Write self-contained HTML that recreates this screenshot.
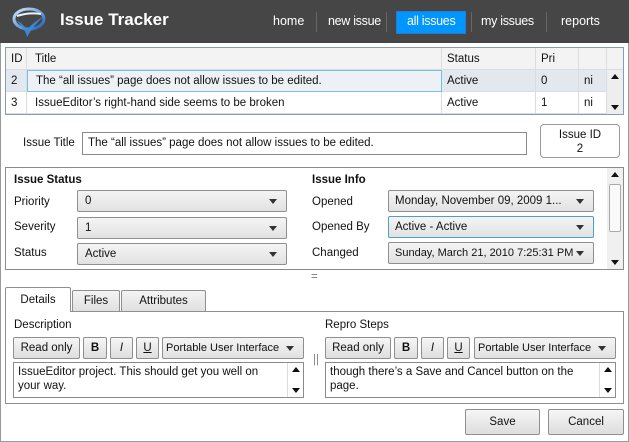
<!DOCTYPE html>
<html><head><style>
*{box-sizing:border-box;margin:0;padding:0}
body{width:629px;height:442px;overflow:hidden;background:#fff;font-family:"Liberation Sans",sans-serif;font-size:11.5px;color:#111;position:relative}
.a{position:absolute}
.hdr{left:0;top:0;width:629px;height:43px;background:#464646}
.nav{color:#fff;font-size:12.5px;top:14px}
.sep{top:12px;width:1px;height:20px;background:#666}
.frame{left:0;top:43px;width:629px;height:399px;border:1px solid #9a9a9a;border-top:none}
.grid{left:5px;top:47px;width:619px;height:68px;border:1px solid #8c9cb0;background:#fff}
.cell{position:absolute;height:22px;line-height:22px;padding-left:5px;border-right:1px solid #d8dde4;border-bottom:1px solid #d8dde4;white-space:nowrap;overflow:hidden}
.cb{position:absolute;height:22px;border:1px solid #8e8f8f;border-radius:2px;background:linear-gradient(#f4f4f4,#e2e2e2);line-height:20px;padding-left:7px;white-space:nowrap;overflow:hidden}
.cb:after{content:"";position:absolute;right:9px;top:8px;border-left:4px solid transparent;border-right:4px solid transparent;border-top:5px solid #333}
.btn{position:absolute;height:22px;border:1px solid #8e8f8f;border-radius:2px;background:linear-gradient(#f6f6f6,#dedede);text-align:center;line-height:20px}
.lbl{position:absolute}
.ta{position:absolute;border:1px solid #8a8a8a;background:#fff;padding:2px 22px 2px 4px;line-height:14px}
.sb{position:absolute;right:0;top:0;width:16px;height:100%;border-left:1px solid #ddd}
.up{position:absolute;left:4px;top:4px;border-left:4px solid transparent;border-right:4px solid transparent;border-bottom:5px solid #111}
.dn{position:absolute;left:4px;bottom:4px;border-left:4px solid transparent;border-right:4px solid transparent;border-top:5px solid #111}
.tab{position:absolute;height:24px;border:1px solid #8e8f8f;border-bottom:none;border-radius:2px 2px 0 0;background:linear-gradient(#f4f4f4,#e0e0e0);text-align:center;line-height:24px}
</style></head><body>
<div class="a hdr"></div>
<svg class="a" style="left:11px;top:4px" width="36" height="36" viewBox="0 0 36 36">
<defs><linearGradient id="g" x1="0" y1="0" x2="1" y2="1"><stop offset="0" stop-color="#cfe6ff"/><stop offset="1" stop-color="#1a5fb8"/></linearGradient></defs>
<ellipse cx="18" cy="15" rx="15" ry="10" fill="none" stroke="url(#g)" stroke-width="3"/>
<path d="M4 16 Q14 24 16 33 Q22 22 33 12 Q20 20 16 26 Q12 19 4 16Z" fill="#3a8de0" opacity=".9"/>
<path d="M6 12 Q18 8 30 10" stroke="#e8f4ff" stroke-width="2" fill="none"/>
</svg>
<div class="a" style="left:60px;top:10px;color:#fff;font-weight:bold;font-size:17px">Issue Tracker</div>
<div class="a nav" style="left:273px">home</div>
<div class="a sep" style="left:316px"></div>
<div class="a nav" style="left:328px;letter-spacing:-0.3px">new issue</div>
<div class="a sep" style="left:386px"></div>
<div class="a" style="left:396px;top:11px;width:70px;height:23px;background:#0096ff;border:1px solid #2a7ad0"></div>
<div class="a nav" style="left:407px;letter-spacing:-0.3px">all issues</div>
<div class="a sep" style="left:471px"></div>
<div class="a nav" style="left:481px;letter-spacing:-0.3px">my issues</div>
<div class="a sep" style="left:546px"></div>
<div class="a nav" style="left:561px">reports</div>
<div class="a frame"></div>

<div class="a grid">
<div class="cell" style="left:0;top:0;width:21px;background:#f3f3f3">ID</div>
<div class="cell" style="left:21px;top:0;width:415px;background:#f3f3f3;padding-left:8px">Title</div>
<div class="cell" style="left:436px;top:0;width:94px;background:#f3f3f3">Status</div>
<div class="cell" style="left:530px;top:0;width:43px;background:#f3f3f3">Pri</div>
<div class="cell" style="left:573px;top:0;width:28px;background:#f3f3f3"></div>
<div class="cell" style="left:0;top:22px;width:21px;background:#e3e7ee">2</div>
<div class="cell" style="left:21px;top:22px;width:415px;background:#edf0f4;border:1px solid #78c3dc;padding-left:8px;line-height:20px">The “all issues” page does not allow issues to be edited.</div>
<div class="cell" style="left:436px;top:22px;width:94px;background:#e3e7ee">Active</div>
<div class="cell" style="left:530px;top:22px;width:43px;background:#e3e7ee">0</div>
<div class="cell" style="left:573px;top:22px;width:28px;background:#e3e7ee">ni</div>
<div class="cell" style="left:0;top:44px;width:21px">3</div>
<div class="cell" style="left:21px;top:44px;width:415px;padding-left:8px">IssueEditor’s right-hand side seems to be broken</div>
<div class="cell" style="left:436px;top:44px;width:94px">Active</div>
<div class="cell" style="left:530px;top:44px;width:43px">1</div>
<div class="cell" style="left:573px;top:44px;width:28px">ni</div>
<div style="position:absolute;left:601px;top:0;width:16px;height:22px;background:#f3f3f3;border-bottom:1px solid #d8dde4"></div>
<div style="position:absolute;left:601px;top:22px;width:16px;height:44px;background:#eeeeee"><div class="up"></div><div class="dn"></div></div>
</div>

<div class="lbl" style="left:23px;top:137px">Issue Title</div>
<div class="a" style="left:82px;top:132px;width:445px;height:23px;border:1px solid #8a8a8a;line-height:21px;padding-left:5px">The “all issues” page does not allow issues to be edited.</div>
<div class="a" style="left:540px;top:124px;width:80px;height:34px;border:1px solid #999;border-radius:4px;text-align:center;line-height:14px;padding-top:3px">Issue ID<br>2</div>

<div class="a" style="left:5px;top:167px;width:619px;height:103px;border:1px solid #8a8a8a"></div>
<div class="a" style="left:607px;top:168px;width:16px;height:101px;background:#f0f0f0"><div class="up"></div><div style="position:absolute;left:2px;top:16px;width:12px;height:48px;border:1px solid #aaa;border-radius:2px;background:#fafafa"></div><div class="dn"></div></div>
<div class="lbl" style="left:14px;top:174px;font-weight:bold">Issue Status</div>
<div class="lbl" style="left:14px;top:196px">Priority</div>
<div class="lbl" style="left:14px;top:221px">Severity</div>
<div class="lbl" style="left:14px;top:247px">Status</div>
<div class="cb" style="left:77px;top:190px;width:210px">0</div>
<div class="cb" style="left:77px;top:217px;width:210px">1</div>
<div class="cb" style="left:77px;top:243px;width:210px">Active</div>
<div class="lbl" style="left:312px;top:174px;font-weight:bold">Issue Info</div>
<div class="lbl" style="left:312px;top:196px">Opened</div>
<div class="lbl" style="left:312px;top:221px">Opened By</div>
<div class="lbl" style="left:312px;top:247px">Changed</div>
<div class="cb" style="left:388px;top:190px;width:206px;padding-left:6px">Monday, November 09, 2009 1...</div>
<div class="cb" style="left:388px;top:216px;width:206px;border-color:#4aa0c8;padding-left:6px">Active - Active</div>
<div class="cb" style="left:388px;top:242px;width:206px;padding-left:6px;font-size:11px">Sunday, March 21, 2010 7:25:31 PM</div>
<div class="lbl" style="left:311px;top:271px;color:#777">=</div>

<div class="a" style="left:5px;top:311px;width:619px;height:93px;border:1px solid #8e8f8f"></div>
<div class="tab" style="left:5px;top:287px;width:66px;height:25px;background:#fff">Details</div>
<div class="tab" style="left:72px;top:290px;width:48px;height:21px;line-height:21px">Files</div>
<div class="tab" style="left:121px;top:290px;width:85px;height:21px;line-height:21px">Attributes</div>
<div class="lbl" style="left:14px;top:319px">Description</div>
<div class="btn" style="left:13px;top:337px;width:67px">Read only</div>
<div class="btn" style="left:83px;top:337px;width:24px;font-weight:bold">B</div>
<div class="btn" style="left:110px;top:337px;width:23px;font-style:italic">I</div>
<div class="btn" style="left:136px;top:337px;width:23px;text-decoration:underline">U</div>
<div class="cb" style="left:162px;top:337px;width:142px;padding-left:3px;padding-right:20px;font-size:11px">Portable User Interface</div>
<div class="ta" style="left:13px;top:362px;width:291px;height:36px">IssueEditor project. This should get you well on your way.<div class="sb"><div class="up"></div><div class="dn"></div></div></div>
<div class="lbl" style="left:313px;top:354px;color:#888">||</div>
<div class="lbl" style="left:325px;top:319px">Repro Steps</div>
<div class="btn" style="left:325px;top:337px;width:66px">Read only</div>
<div class="btn" style="left:394px;top:337px;width:24px;font-weight:bold">B</div>
<div class="btn" style="left:421px;top:337px;width:23px;font-style:italic">I</div>
<div class="btn" style="left:447px;top:337px;width:23px;text-decoration:underline">U</div>
<div class="cb" style="left:474px;top:337px;width:142px;padding-left:3px;padding-right:20px;font-size:11px">Portable User Interface</div>
<div class="ta" style="left:325px;top:362px;width:291px;height:36px">though there’s a Save and Cancel button on the page.<div class="sb"><div class="up"></div><div class="dn"></div></div></div>

<div class="btn" style="left:465px;top:409px;width:75px;height:26px;line-height:24px">Save</div>
<div class="btn" style="left:548px;top:409px;width:76px;height:26px;line-height:24px">Cancel</div>
</body></html>
